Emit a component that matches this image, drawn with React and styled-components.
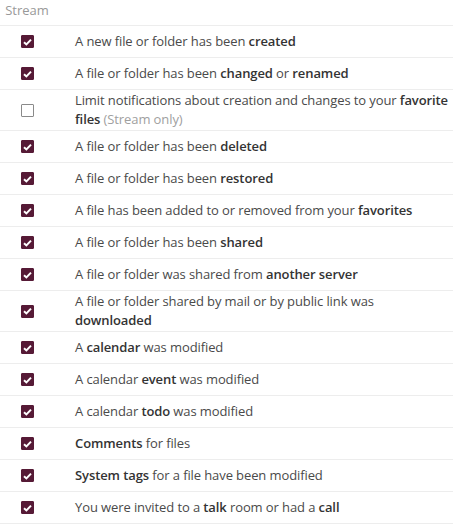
import React from "react";
import styled, { createGlobalStyle } from "styled-components";

const Global = createGlobalStyle`
  html, body { margin: 0; padding: 0; background: #fff; }
  body { font-family: "Open Sans", "Noto Sans", sans-serif; color: #444; }
`;

const Table = styled.div`
  width: 453px;
  display: flex;
  flex-direction: column;
`;

const Row = styled.div`
  display: grid;
  grid-template-columns: 54px 1fr;
  column-gap: 21px;
  align-items: center;
  min-height: ${(p) => (p.$head ? "25px" : "31px")};
  border-bottom: 1px solid #ededed;
`;

const HeadCell = styled.div`
  text-align: center;
  font-size: 13px;
  line-height: 19px;
  color: #999;
  padding-bottom: 4px;
`;

const CheckCell = styled.div`
  display: flex;
  justify-content: center;
  align-items: center;
`;

const Box = styled.span`
  width: 13px;
  height: 13px;
  box-sizing: border-box;
  border-radius: 1px;
  display: flex;
  align-items: center;
  justify-content: center;
  background: ${(p) => (p.$on ? "#561a36" : "#fff")};
  border: 1px solid ${(p) => (p.$on ? "#561a36" : "#8a8a8a")};
`;

const Label = styled.div`
  font-size: 13px;
  line-height: 19px;
  letter-spacing: -0.1px;
  padding: 1px 0;
  color: #4a4a4a;
  b { font-weight: 600; color: #333; }
`;

const Muted = styled.span`
  color: #a0a0a0;
`;

const Check = ({ on }) => (
  <Box $on={on}>
    {on && (
      <svg width="9" height="8" viewBox="0 0 9 8">
        <path d="M1 4.2 L3.4 6.4 L8 1.6" fill="none" stroke="#fff" strokeWidth="2" />
      </svg>
    )}
  </Box>
);

const rows = [
  [true, <>A new file or folder has been <b>created</b></>],
  [true, <>A file or folder has been <b>changed</b> or <b>renamed</b></>],
  [false, <>Limit notifications about creation and changes to your <b>favorite files</b> <Muted>(Stream only)</Muted></>],
  [true, <>A file or folder has been <b>deleted</b></>],
  [true, <>A file or folder has been <b>restored</b></>],
  [true, <>A file has been added to or removed from your <b>favorites</b></>],
  [true, <>A file or folder has been <b>shared</b></>],
  [true, <>A file or folder was shared from <b>another server</b></>],
  [true, <>A file or folder shared by mail or by public link was <b>downloaded</b></>],
  [true, <>A <b>calendar</b> was modified</>],
  [true, <>A calendar <b>event</b> was modified</>],
  [true, <>A calendar <b>todo</b> was modified</>],
  [true, <><b>Comments</b> for files</>],
  [true, <><b>System tags</b> for a file have been modified</>],
  [true, <>You were invited to a <b>talk</b> room or had a <b>call</b></>],
];

export default function App() {
  return (
    <>
      <Global />
      <Table>
        <Row $head>
          <HeadCell>Stream</HeadCell>
          <div />
        </Row>
        {rows.map(([on, text], i) => (
          <Row key={i}>
            <CheckCell>
              <Check on={on} />
            </CheckCell>
            <Label>{text}</Label>
          </Row>
        ))}
      </Table>
    </>
  );
}
